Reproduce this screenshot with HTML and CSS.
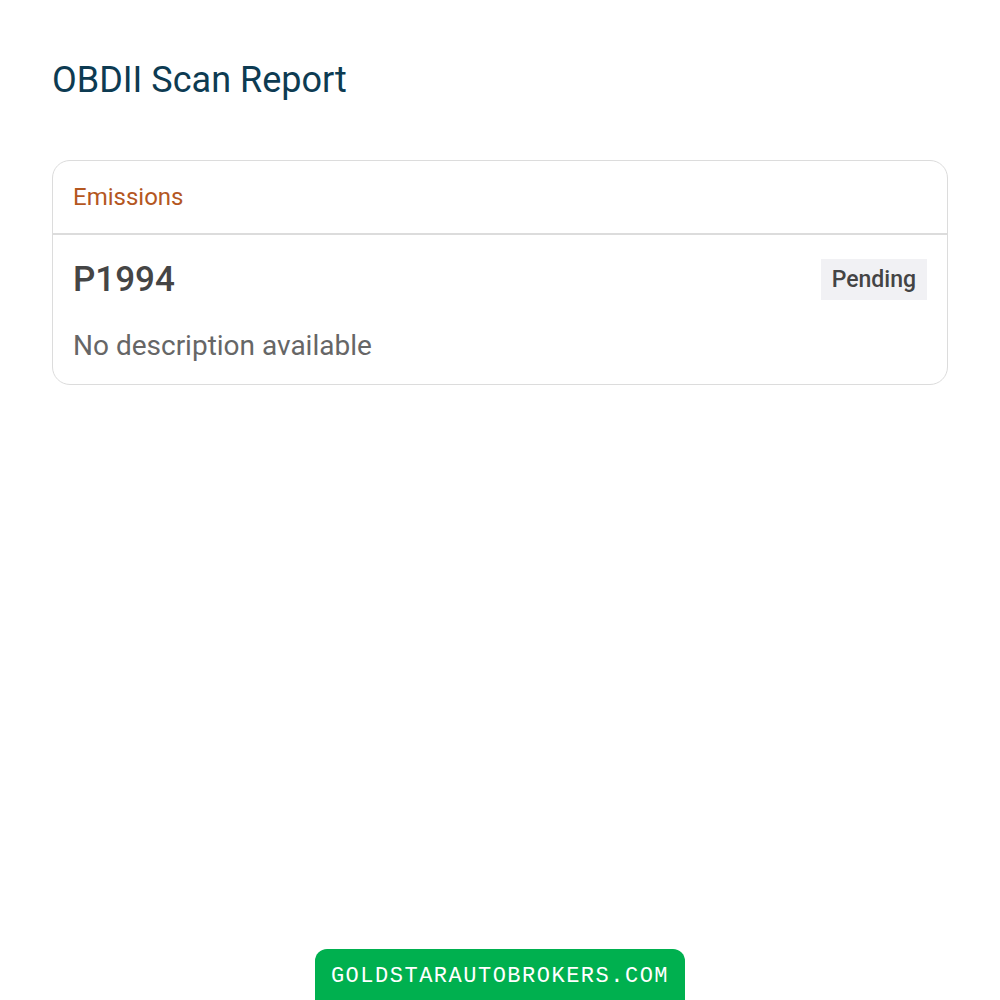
FILE: index.html
```html
<!DOCTYPE html>
<html lang="en">
<head>
    <meta charset="UTF-8">
    <meta name="viewport" content="width=device-width, initial-scale=1.0">
    <title>OBDII Scan Report</title>
    <link rel="stylesheet" href="styles.css">
</head>
<body>
    <div class="page">
        <h1>OBDII Scan Report</h1>

        <div class="card">
            <div class="card-header">Emissions</div>
            <div class="card-body">
                <div class="code-row">
                    <span class="code">P1994</span>
                    <span class="status">Pending</span>
                </div>
                <p class="desc">No description available</p>
            </div>
        </div>
    </div>

    <div class="footer">
        <span class="brand">GOLDSTARAUTOBROKERS.COM</span>
    </div>
</body>
</html>
```

FILE: styles.css
```css
body {
    margin: 0;
    font-family: Roboto, 'Noto Sans', sans-serif;
    background-color: #fff;
    height: 1000px;
    position: relative;
}

.page {
    padding: 52px 52px 0;
}

h1 {
    margin: 0 0 52px;
    font-size: 36px;
    font-weight: 400;
    color: #0d3b52;
    line-height: 56px;
}

.card {
    border: 1px solid #dcdcdc;
    border-radius: 18px;
}

.card-header {
    padding: 0 20px;
    height: 72px;
    line-height: 72px;
    font-size: 24px;
    color: #b4571f;
    border-bottom: 2px solid #dcdcdc;
}

.card-body {
    padding: 24px 20px 20px;
}

.code-row {
    display: flex;
    justify-content: space-between;
    align-items: center;
}

.code {
    font-size: 35px;
    font-weight: 500;
    color: #454545;
}

.status {
    background-color: #f1f1f4;
    color: #444;
    font-size: 23px;
    font-weight: 500;
    padding: 7px 11px;
}

.desc {
    margin: 28px 0 0;
    font-size: 28px;
    line-height: 36px;
    color: #666;
}

.footer {
    position: absolute;
    bottom: 0;
    left: 0;
    right: 0;
    display: flex;
    justify-content: center;
}

.brand {
    background-color: #00b04f;
    color: #fff;
    font-family: 'Liberation Mono', monospace;
    font-size: 22px;
    letter-spacing: 1.5px;
    padding: 15px 15px 11px;
    border-radius: 12px 12px 0 0;
    width: 340px;
    text-align: center;
}
```
